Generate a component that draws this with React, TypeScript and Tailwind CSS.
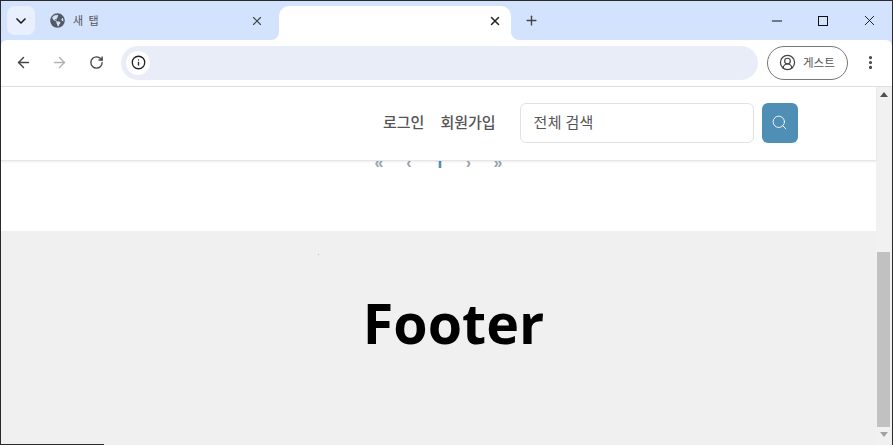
import { ArrowLeft, ArrowRight, ChevronDown, CircleUserRound, EllipsisVertical, Info, Minus, Plus, RotateCw, Search, X } from "lucide-react";
import { FaGlobeAmericas } from "react-icons/fa";

const KR = "font-['Noto_Sans_CJK_KR','Noto_Sans',sans-serif]";

function TabStrip() {
  return (
    <div className="flex h-[39px] items-stretch bg-[#d3e3fd] pl-[6px] pt-[5px]">
      <div className="mb-[5px] flex h-[29px] w-[28px] items-center justify-center rounded-lg bg-[#e8f0fe]">
        <ChevronDown size={16} strokeWidth={2.5} className="text-[#1f1f1f]" />
      </div>
      <div className="ml-[15px] flex h-[29px] w-[229px] items-center">
        <FaGlobeAmericas size={15} className="text-[#545a63]" />
        <span className={`${KR} ml-2 text-[11px] tracking-[1.5px] text-[#555]`}>새 탭</span>
        <X size={14} strokeWidth={2} className="ml-[150px] text-[#444]" />
      </div>
      <div className="relative flex w-[232px] items-center justify-end rounded-t-[10px] bg-white pr-[9px] pb-[5px]">
        <div className="absolute bottom-0 -left-2 h-2 w-2 bg-white">
          <div className="h-full w-full rounded-br-lg bg-[#d3e3fd]" />
        </div>
        <div className="absolute -right-2 bottom-0 h-2 w-2 bg-white">
          <div className="h-full w-full rounded-bl-lg bg-[#d3e3fd]" />
        </div>
        <X size={14} strokeWidth={2.5} className="text-[#222]" />
      </div>
      <div className="ml-[13px] flex h-[29px] items-center">
        <Plus size={15} strokeWidth={2.25} className="text-[#444]" />
      </div>
      <div className="ml-auto flex h-[29px] items-center text-[#111]">
        <div className="flex w-[46px] justify-center"><Minus size={16} strokeWidth={1.5} /></div>
        <div className="flex w-[46px] justify-center"><div className="h-[10px] w-[10px] border border-[#111]" /></div>
        <div className="flex w-[46px] justify-center"><X size={17} strokeWidth={1.3} /></div>
      </div>
    </div>
  );
}

function Toolbar() {
  return (
    <div className="flex h-[47px] items-center rounded-t-[6px] border-b border-[#dfdfdf] bg-white pb-px pl-[14px] pr-[12px]">
      <ArrowLeft size={17} strokeWidth={2} className="text-[#444]" />
      <ArrowRight size={17} strokeWidth={2} className="ml-[19px] text-[#b3b3b3]" />
      <RotateCw size={15} strokeWidth={2.1} className="ml-[21px] text-[#444]" />
      <div className="ml-[17px] flex h-[34px] w-[637px] items-center rounded-full bg-[#e9edf7] pl-[5px]">
        <div className="flex h-6 w-6 items-center justify-center rounded-full bg-white">
          <Info size={15} strokeWidth={2.1} className="text-[#222]" />
        </div>
      </div>
      <div className="ml-[9px] flex h-[34px] w-[81px] items-center rounded-full border border-[#777] pl-[11px]">
        <CircleUserRound size={17} strokeWidth={1.75} className="text-[#444]" />
        <span className={`${KR} ml-[7px] text-[11.5px] text-[#555]`}>게스트</span>
      </div>
      <EllipsisVertical size={17} strokeWidth={2.5} className="ml-[14px] text-[#444]" />
    </div>
  );
}

function SiteHeader() {
  return (
    <header className={`${KR} relative z-10 flex h-[74px] items-center border-b border-[#e6e6e6] bg-white pb-[2px] pl-[382px] shadow-[0_1px_2px_rgba(0,0,0,0.08)]`}>
      <a className="text-[15px] font-medium text-[#555]">로그인</a>
      <a className="ml-[16px] text-[15px] font-medium text-[#555]">회원가입</a>
      <div className="ml-[24px] flex h-10 w-[234px] items-center rounded-md border border-[#dee2e6] bg-white pl-[13px] text-[15px] tracking-[0.3px] text-[#555]">
        전체 검색
      </div>
      <button className="ml-2 flex h-10 w-9 items-center justify-center rounded-md bg-[#4f8fb5]">
        <Search size={17} strokeWidth={1.25} className="text-white" />
      </button>
    </header>
  );
}

function Pagination() {
  return (
    <div className="-mt-[6px] flex h-[76px] justify-center bg-white font-['Liberation_Sans',sans-serif] text-[16px] font-bold leading-[16px] text-[#95a3ad]">
      <div className="flex h-[13px] overflow-hidden">
        <span className="flex w-[30px] justify-center">«</span>
        <span className="flex w-[30px] justify-center">‹</span>
        <span className="flex w-[30px] justify-center font-['Open_Sans',sans-serif] text-[#4f8fb5]">1</span>
        <span className="flex w-[29px] justify-center">›</span>
        <span className="flex w-[30px] justify-center">»</span>
      </div>
    </div>
  );
}

function Footer() {
  return (
    <footer className="relative flex flex-1 items-start justify-center bg-[#f0f0f0] pl-[30px] pt-[49px]">
      <span className="absolute left-[317px] top-[23px] h-px w-px bg-[#bbb]" />
      <h1 className="font-['Open_Sans','Noto_Sans',sans-serif] text-[55.5px] font-bold leading-[86px] text-black">Footer</h1>
    </footer>
  );
}

function Scrollbar() {
  return (
    <div className="flex w-[16px] flex-col items-center bg-[#f1f1f1] pr-px">
      <div className="mt-[5px] h-0 w-0 border-x-[4px] border-b-[5px] border-x-transparent border-b-[#505050]" />
      <div className="mt-[155px] h-[175px] w-[13px] bg-[#c1c1c1]" />
      <div className="mt-[5px] h-0 w-0 border-x-[4px] border-t-[5px] border-x-transparent border-t-[#a3a3a3]" />
    </div>
  );
}

export default function App() {
  return (
    <div className="relative flex h-[445px] w-[893px] flex-col overflow-hidden border-r border-l border-t border-[#2a2a2a] bg-[#d3e3fd] font-['Liberation_Sans',sans-serif]">
      <TabStrip />
      <Toolbar />
      <div className="flex min-h-0 flex-1">
        <div className="flex min-w-0 flex-1 flex-col">
          <SiteHeader />
          <Pagination />
          <Footer />
        </div>
        <Scrollbar />
      </div>
      <div className="absolute bottom-0 left-0 h-px w-[103px] bg-[#2a2a2a]" />
    </div>
  );
}
